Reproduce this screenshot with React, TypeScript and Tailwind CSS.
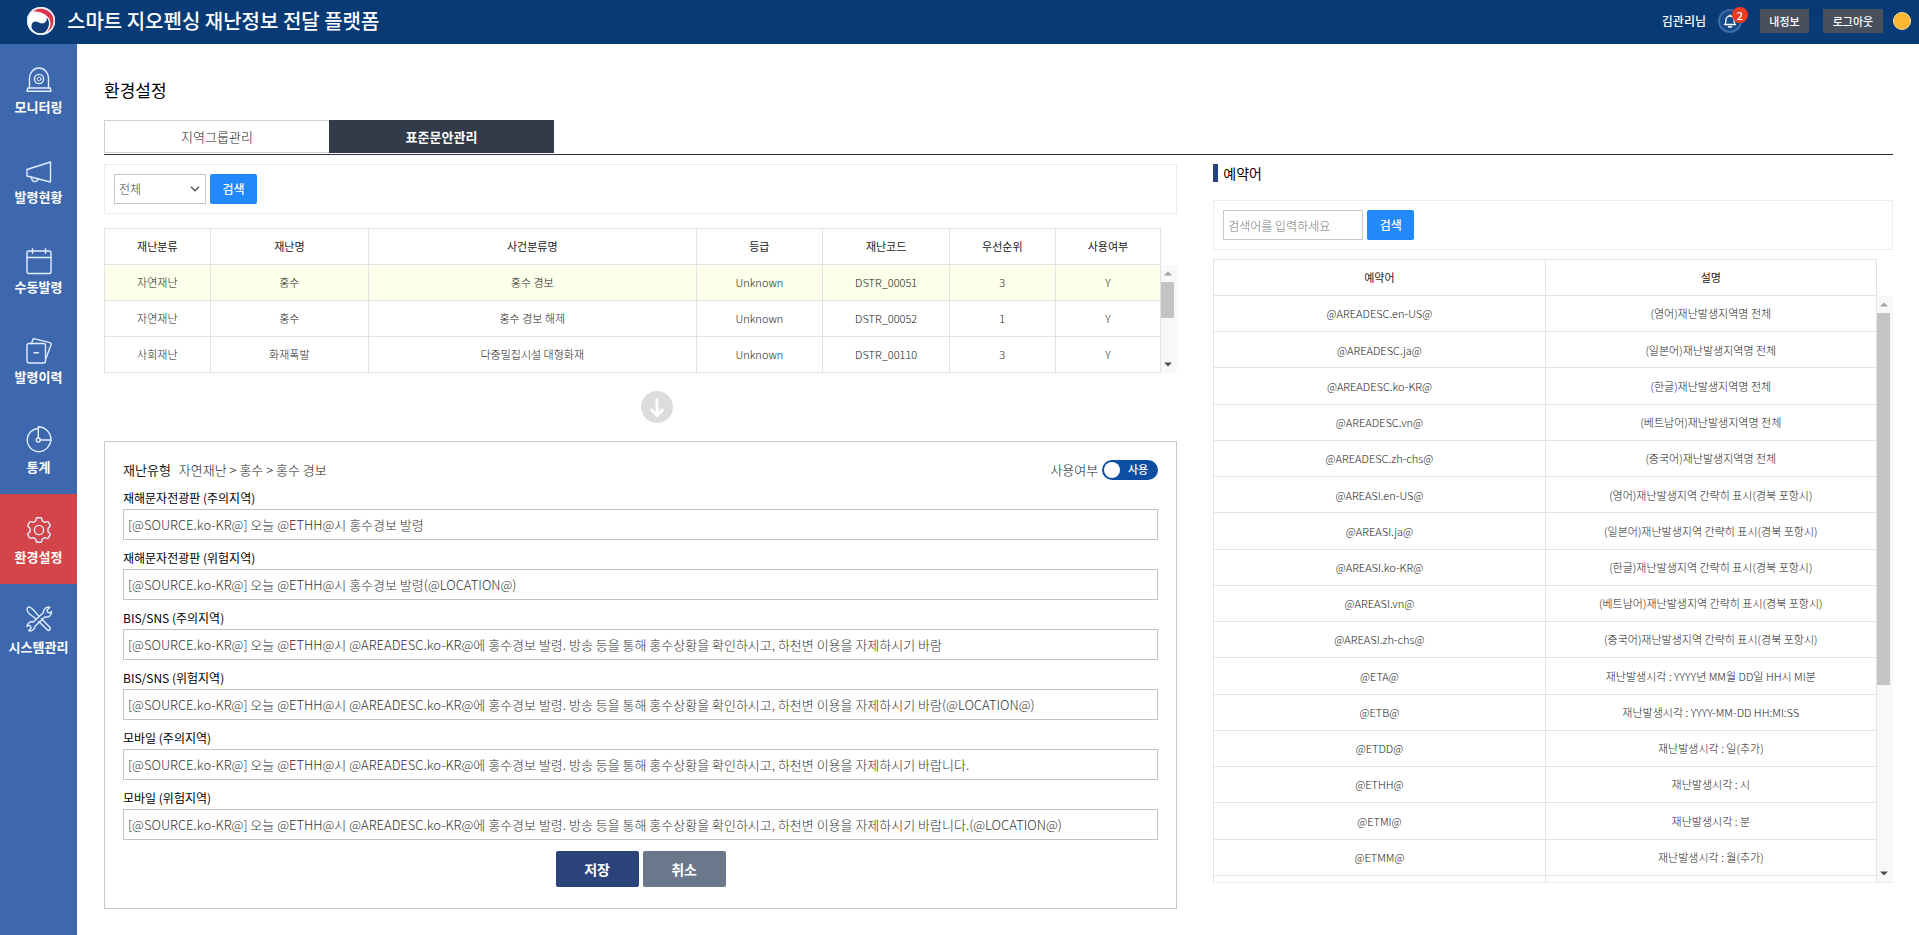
import React, { useState } from "react";

const iconProps = {
  viewBox: "0 0 26 26",
  className: "size-[26px] overflow-visible text-[#e2edff]",
  fill: "none",
  stroke: "currentColor",
  strokeWidth: 1.4,
  strokeLinecap: "round" as const,
  strokeLinejoin: "round" as const,
  "aria-hidden": true,
};

const MonitorIcon = () => (
  <svg {...iconProps}>
    <path d="M3.500 22V12.500a9.500 10.500 0 0 1 19 0V22" />
    <path d="M1.800 22h22.400l.800 3.200H1z" />
    <circle cx="13" cy="13" r="4.600" />
    <circle cx="13" cy="13" r="2" strokeWidth="0.900" />
  </svg>
);

const MegaphoneIcon = () => (
  <svg {...iconProps} viewBox="0 -3 26 26">
    <path d="M24.500 3v20L1 17v-6.500z" />
    <path d="M5.500 18.200c0 2 1 3.800 2.700 4.300 1.500.500 3.300-.300 3.700-2.500" />
  </svg>
);

const CalendarIcon = () => (
  <svg {...iconProps} viewBox="0 -2 26 26">
    <rect x="1" y="3" width="24" height="22.500" rx="1.800" />
    <path d="M1 9.500h24M6.500 0.800v4.500M19.500 0.800v4.500" />
  </svg>
);

const FilesIcon = () => (
  <svg {...iconProps} viewBox="0 -2 26 26">
    <rect x="1" y="5.500" width="18.500" height="19.500" rx="2" />
    <path d="M5.500 5.500l1.300-3.700c.300-.800 1-1.200 2-.900l15 3.700c1 .200 1.600 1 1.300 2L20 20.500" />
    <path d="M8 14.800h4.500" />
  </svg>
);

const ChartIcon = () => (
  <svg {...iconProps}>
    <path d="M12 2.500A11.600 11.600 0 1 0 23.500 18.500" />
    <path d="M12.300 12V0.800C19 1 24.800 6 25 13.500c0 1.800-.500 3.500-1.500 5" />
    <path d="M14.300 14H25" />
    <circle cx="12.300" cy="14" r="2" />
  </svg>
);

const GearIcon = () => (
  <svg {...iconProps} viewBox="0 -1 26 26">
    <path d="M10.300 1.500a1 1 0 0 1 1-.800h3.400a1 1 0 0 1 1 .800l.600 2.500 2.400 1.400 2.500-.700a1 1 0 0 1 1.200.500l1.700 2.900a1 1 0 0 1-.200 1.300L22 11.200v3.600l1.900 1.800a1 1 0 0 1 .200 1.300l-1.700 2.900a1 1 0 0 1-1.200.500l-2.500-.700-2.400 1.400-.600 2.500a1 1 0 0 1-1 .800h-3.400a1 1 0 0 1-1-.800L9.700 22l-2.400-1.400-2.500.700a1 1 0 0 1-1.200-.500l-1.700-2.900a1 1 0 0 1 .200-1.300L4 14.800v-3.600L2.100 9.400a1 1 0 0 1-.200-1.300l1.700-2.900a1 1 0 0 1 1.200-.500l2.500.700L9.700 4z" />
    <circle cx="13" cy="13" r="4.600" />
  </svg>
);

const ToolsIcon = () => (
  <svg {...iconProps}>
    <path d="M17.500 6.500a5 5 0 0 1 6.300-5.200l-2.800 2.900.800 2.200 2.300.600 1.500-1.400a5 5 0 0 1-6.500 5.200L9 20.300a5 5 0 0 1-6.400 4.400l2.500-2.600-.700-2.200-2.200-.600-1.300 1.300a5 5 0 0 1 6.300-4.600z" />
    <path d="M10.500 13.200 3 7.500C1.500 6 .800 4 1.200 2.200c.500-1.200 2-1.500 3.300-.700L7.500 4l5.700 6.600M15.500 12.800l8.300 8.400c1.600 1.800-.800 4.300-2.600 2.600l-8.400-8.300" />
  </svg>
);

const menu = [
  { label: "모니터링", Icon: MonitorIcon },
  { label: "발령현황", Icon: MegaphoneIcon },
  { label: "수동발령", Icon: CalendarIcon },
  { label: "발령이력", Icon: FilesIcon },
  { label: "통계", Icon: ChartIcon },
  { label: "환경설정", Icon: GearIcon, active: true },
  { label: "시스템관리", Icon: ToolsIcon },
];

const disasterColumns = [
  { label: "재난분류", width: "w-[10%]" },
  { label: "재난명", width: "w-[15%]" },
  { label: "사건분류명", width: "w-[31%]" },
  { label: "등급", width: "w-[12%]" },
  { label: "재난코드", width: "w-[12%]" },
  { label: "우선순위", width: "w-[10%]" },
  { label: "사용여부", width: "w-[10%]" },
];

const disasters = [
  ["자연재난", "홍수", "홍수 경보", "Unknown", "DSTR_00051", "3", "Y"],
  ["자연재난", "홍수", "홍수 경보 해제", "Unknown", "DSTR_00052", "1", "Y"],
  ["사회재난", "화재폭발", "다중밀집시설 대형화재", "Unknown", "DSTR_00110", "3", "Y"],
];

const reserved = [
  ["@AREADESC.en-US@", "(영어)재난발생지역명 전체"],
  ["@AREADESC.ja@", "(일본어)재난발생지역명 전체"],
  ["@AREADESC.ko-KR@", "(한글)재난발생지역명 전체"],
  ["@AREADESC.vn@", "(베트남어)재난발생지역명 전체"],
  ["@AREADESC.zh-chs@", "(중국어)재난발생지역명 전체"],
  ["@AREASI.en-US@", "(영어)재난발생지역 간략히 표시(경북 포항시)"],
  ["@AREASI.ja@", "(일본어)재난발생지역 간략히 표시(경북 포항시)"],
  ["@AREASI.ko-KR@", "(한글)재난발생지역 간략히 표시(경북 포항시)"],
  ["@AREASI.vn@", "(베트남어)재난발생지역 간략히 표시(경북 포항시)"],
  ["@AREASI.zh-chs@", "(중국어)재난발생지역 간략히 표시(경북 포항시)"],
  ["@ETA@", "재난발생시각 : YYYY년 MM월 DD일 HH시 MI분"],
  ["@ETB@", "재난발생시각 : YYYY-MM-DD HH:MI:SS"],
  ["@ETDD@", "재난발생시각 : 일(추가)"],
  ["@ETHH@", "재난발생시각 : 시"],
  ["@ETMI@", "재난발생시각 : 분"],
  ["@ETMM@", "재난발생시각 : 월(추가)"],
];

const longText =
  "[@SOURCE.ko-KR@] 오늘 @ETHH@시 @AREADESC.ko-KR@에 홍수경보 발령. 방송 등을 통해 홍수상황을 확인하시고, 하천변 이용을 자제하시기 ";

const fields = [
  { id: "board-caution", label: "재해문자전광판 (주의지역)", value: "[@SOURCE.ko-KR@] 오늘 @ETHH@시 홍수경보 발령" },
  { id: "board-danger", label: "재해문자전광판 (위험지역)", value: "[@SOURCE.ko-KR@] 오늘 @ETHH@시 홍수경보 발령(@LOCATION@)" },
  { id: "bis-caution", label: "BIS/SNS (주의지역)", value: longText + "바람" },
  { id: "bis-danger", label: "BIS/SNS (위험지역)", value: longText + "바람(@LOCATION@)" },
  { id: "mobile-caution", label: "모바일 (주의지역)", value: longText + "바랍니다." },
  { id: "mobile-danger", label: "모바일 (위험지역)", value: longText + "바랍니다.(@LOCATION@)" },
];

function Emblem() {
  return (
    <svg viewBox="0 0 28 28" className="size-7" aria-hidden="true">
      <circle cx="14" cy="14" r="14" fill="#fff" />
      <path d="M6 4.500A12.600 12.600 0 0 1 26.500 15.500 13 13 0 0 1 20 25C24.500 20 24.500 13.500 20.500 9.500 16.500 5.500 11 4 6 4.500z" fill="#d8364f" />
      <path d="M4.800 21.500C3.800 17.500 5.500 14.500 8.500 14.500c3 0 4 2.500 7.500 1.800 3-.700 4.500-3.300 3.600-6 3.900 4 2.900 10.700-1.600 15C13 27.500 7.500 26 4.800 21.500z" fill="#123f7c" />
      <circle cx="14" cy="14" r="13.400" fill="none" stroke="#e9eef6" strokeWidth="1.200" />
    </svg>
  );
}

function Scrollbar({ thumb }: { thumb: string }) {
  return (
    <div className="flex w-4 shrink-0 flex-col items-start bg-[#f8f8f8]" aria-hidden="true">
      <svg viewBox="0 0 14 17" className="h-[17px] w-3.5 shrink-0">
        <path d="M3 10.500h8L7 6.500z" fill="#a3a3a3" />
      </svg>
      <div className={`w-[13px] bg-[#c4c4c4] ${thumb}`} />
      <svg viewBox="0 0 14 17" className="mt-auto h-[17px] w-3.5 shrink-0">
        <path d="M3 6.500h8L7 10.500z" fill="#505050" />
      </svg>
    </div>
  );
}

const searchButton = "h-[30px] w-[47px] rounded-xs bg-[#2189f9] text-xs font-medium text-white";

export default function App() {
  const [enabled, setEnabled] = useState(true);

  return (
    <div className="flex min-h-screen flex-col bg-white font-['Noto_Sans_CJK_KR','Noto_Sans',sans-serif] font-light text-[#222]">
      <header className="flex h-11 items-center justify-between bg-[#083a76] pr-2 pb-0.5 pl-[27px] text-white">
        <div className="flex items-center gap-3">
          <Emblem />
          <h1 className="text-xl leading-6 font-medium">스마트 지오펜싱 재난정보 전달 플랫폼</h1>
        </div>
        <div className="flex items-center">
          <span className="text-xs font-medium">김관리님</span>
          <button type="button" aria-label="알림 2건" className="relative ml-3 flex size-6 items-center justify-center rounded-full border-2 border-[#3f6ba6] bg-[#174a88]">
            <svg viewBox="0 0 14 14" className="size-3.5" fill="none" stroke="#fff" strokeWidth="1.300" strokeLinecap="round" strokeLinejoin="round" aria-hidden="true">
              <path d="M1.500 10.500h11C11 9.500 11 8 11 6a4 4 0 0 0-8 0c0 2 0 3.500-1.500 4.500zM5.500 12.500c.800.900 2.200.900 3 0M7 1v1" />
            </svg>
            <span className="absolute -top-1 left-3 flex size-4 items-center justify-center rounded-full bg-[#f03a1f] text-[11px] leading-4 font-medium">2</span>
          </button>
          <button type="button" className="ml-[18px] h-6 w-[49px] bg-[#48505e] text-[11px] font-medium">내정보</button>
          <button type="button" className="ml-3.5 h-6 w-[60px] bg-[#48505e] text-[11px] font-medium">로그아웃</button>
          <span className="ml-[10px] size-[18px] rounded-full border border-[#ffe0a0] bg-[#fdb731]" />
        </div>
      </header>

      <div className="flex flex-1">
        <nav className="w-[77px] shrink-0 bg-[#3d68ae] text-white">
          {menu.map(({ label, Icon, active }) => (
            <a
              key={label}
              href="#"
              aria-current={active ? "page" : undefined}
              className={`flex h-[90px] flex-col items-center pt-[22px] text-[13px] leading-5 font-bold whitespace-nowrap ${active ? "bg-[#d34549]" : ""}`}
            >
              <Icon />
              <span className="mt-[5px]">{label}</span>
            </a>
          ))}
        </nav>

        <main className="min-w-0 flex-1 pt-[34px] pr-[26px] pb-6 pl-[27px]">
          <h2 className="text-[17px] leading-6 font-normal text-black">환경설정</h2>
          <div role="tablist" className="mt-[18px] flex border-b border-[#30303a] pb-px text-[13px]">
            <button type="button" role="tab" aria-selected="false" className="h-[33px] w-[225px] border border-r-0 border-[#cfcfcf]">지역그룹관리</button>
            <button type="button" role="tab" aria-selected="true" className="h-[33px] w-[225px] bg-[#323b49] font-bold text-white">표준문안관리</button>
          </div>

          <div className="grid grid-cols-[60fr_38fr] gap-9 pt-[9px]">
            <section className="min-w-0">
              <form className="flex h-[50px] items-center gap-1 border border-[#ececec] px-[9px]">
                <div className="relative">
                  <select aria-label="재난분류" className="h-[30px] w-[92px] appearance-none border border-[#c8c8c8] bg-white pl-1 text-xs text-[#444]">
                    <option>전체</option>
                  </select>
                  <svg viewBox="0 0 10 6" className="pointer-events-none absolute top-3 right-1.5 h-1.5 w-2.5" fill="none" stroke="#555" strokeWidth="1.500" aria-hidden="true">
                    <path d="M1 0.800l4 4 4-4" />
                  </svg>
                </div>
                <button type="button" className={searchButton}>검색</button>
              </form>

              <div className="mt-[14px] flex h-[145px] overflow-hidden">
                <table className="flex-1 table-fixed border-collapse text-center text-[11px]">
                  <thead>
                    <tr className="h-9">
                      {disasterColumns.map((c) => (
                        <th key={c.label} scope="col" className={`border border-[#e2e2e2] font-normal ${c.width}`}>{c.label}</th>
                      ))}
                    </tr>
                  </thead>
                  <tbody>
                    {disasters.map((row, i) => (
                      <tr key={row[4]} className={`h-9 ${i === 0 ? "bg-[#fcffe9]" : ""}`}>
                        {row.map((cell, j) => (
                          <td key={j} className="border border-[#e2e2e2]">{cell}</td>
                        ))}
                      </tr>
                    ))}
                  </tbody>
                </table>
                <div className="mt-[37px] flex"><Scrollbar thumb="h-9" /></div>
              </div>

              <div className="flex justify-center py-[18px] pl-8">
                <svg viewBox="0 0 32 32" className="size-8" aria-hidden="true">
                  <circle cx="16" cy="16" r="16" fill="#dcdcdc" />
                  <path d="M16 7.500V24M9.800 18.300 16 24.500l6.200-6.200" fill="none" stroke="#fff" strokeWidth="2.800" />
                </svg>
              </div>

              <form className="border border-[#c8c8c8] px-[18px] pt-[17px] pb-[21px] text-[13px]">
                <div className="flex h-[21px] items-center justify-between">
                  <p className="flex gap-2">
                    <span className="font-normal">재난유형</span>
                    <span>자연재난 &gt; 홍수 &gt; 홍수 경보</span>
                  </p>
                  <label className="relative flex items-center gap-1">
                    사용여부
                    <input type="checkbox" role="switch" className="peer absolute right-0 h-5 w-14 cursor-pointer opacity-0" checked={enabled} onChange={(e) => setEnabled(e.target.checked)} />
                    <span className="flex h-5 w-14 items-center justify-between rounded-full bg-[#0b4ea2] pr-2.5 pl-0.5 text-[11px] font-medium text-white">
                      <span className="size-4 rounded-full bg-white" />
                      사용
                    </span>
                  </label>
                </div>
                {fields.map((f) => (
                  <div key={f.id} className="mt-2 flex flex-col">
                    <label htmlFor={f.id} className="h-[21px] text-xs leading-5 font-normal text-black">{f.label}</label>
                    <input id={f.id} type="text" defaultValue={f.value} className="h-[31px] w-full border border-[#c4c4c4] px-1 text-[13px] text-[#333]" />
                  </div>
                ))}
                <div className="mt-[11px] flex justify-center gap-1 text-sm font-bold text-white">
                  <button type="button" className="h-9 w-[83px] rounded-xs bg-[#2a4479]">저장</button>
                  <button type="button" className="h-9 w-[83px] rounded-xs bg-[#6b778a]">취소</button>
                </div>
              </form>
            </section>

            <section className="min-w-0">
              <h3 className="flex h-[18px] items-center gap-[5px] text-sm font-normal text-black">
                <span className="h-[18px] w-[5px] bg-[#26437c]" />
                예약어
              </h3>
              <form className="mt-[18px] flex h-[50px] items-center gap-1 border border-[#ececec] px-[9px]">
                <input type="text" aria-label="검색어" placeholder="검색어를 입력하세요" className="h-[30px] w-[140px] border border-[#c8c8c8] px-1 text-xs placeholder:text-[#777]" />
                <button type="button" className={searchButton}>검색</button>
              </form>
              <div className="mt-[9px] flex h-[624px] overflow-hidden border-b border-[#ececec]">
                <table className="h-[653px] flex-1 table-fixed border-collapse text-center text-[11px]">
                  <thead>
                    <tr className="h-9">
                      <th scope="col" className="w-1/2 border border-[#e4e4e4] font-normal">예약어</th>
                      <th scope="col" className="w-1/2 border border-[#e4e4e4] font-normal">설명</th>
                    </tr>
                  </thead>
                  <tbody>
                    {reserved.map(([key, text]) => (
                      <tr key={key} className="h-9">
                        <td className="border border-[#e4e4e4]">{key}</td>
                        <td className="border border-[#e4e4e4]">{text}</td>
                      </tr>
                    ))}
                    <tr className="h-9">
                      <td className="border border-[#e4e4e4]" />
                      <td className="border border-[#e4e4e4]" />
                    </tr>
                  </tbody>
                </table>
                <div className="mt-[37px] flex"><Scrollbar thumb="h-[372px]" /></div>
              </div>
            </section>
          </div>
        </main>
      </div>
    </div>
  );
}
